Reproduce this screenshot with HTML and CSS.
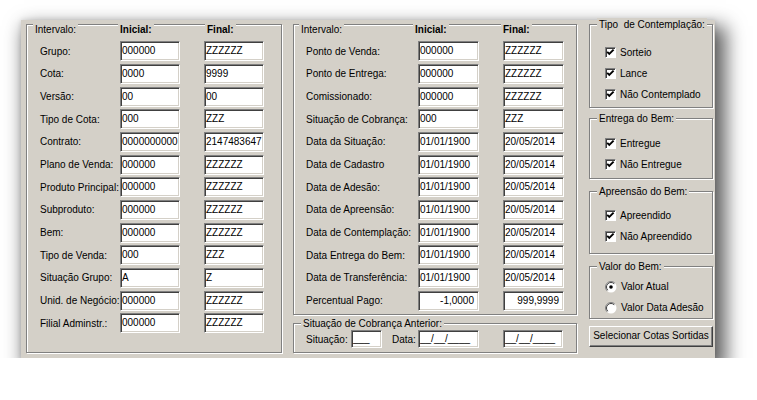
FILE: index.html
```html
<!DOCTYPE html>
<html>
<head>
<meta charset="utf-8">
<link rel="stylesheet" href="styles.css">
</head>
<body>
<div class="window">
  <div class="group g-left">
    <div class="grid grid-left">
      <span class="cap cap-first">Intervalo:</span><span class="cap cap-b cap-ini">Inicial:</span><span class="cap cap-b cap-fin">Final:</span>
      <span class="lbl">Grupo:</span><div class="edit">000000</div><div class="edit">ZZZZZZ</div>
      <span class="lbl">Cota:</span><div class="edit">0000</div><div class="edit">9999</div>
      <span class="lbl">Versão:</span><div class="edit">00</div><div class="edit">00</div>
      <span class="lbl">Tipo de Cota:</span><div class="edit">000</div><div class="edit">ZZZ</div>
      <span class="lbl">Contrato:</span><div class="edit">0000000000</div><div class="edit">2147483647</div>
      <span class="lbl">Plano de Venda:</span><div class="edit">000000</div><div class="edit">ZZZZZZ</div>
      <span class="lbl">Produto Principal:</span><div class="edit">000000</div><div class="edit">ZZZZZZ</div>
      <span class="lbl">Subproduto:</span><div class="edit">000000</div><div class="edit">ZZZZZZ</div>
      <span class="lbl">Bem:</span><div class="edit">000000</div><div class="edit">ZZZZZZ</div>
      <span class="lbl">Tipo de Venda:</span><div class="edit">000</div><div class="edit">ZZZ</div>
      <span class="lbl">Situação Grupo:</span><div class="edit">A</div><div class="edit">Z</div>
      <span class="lbl">Unid. de Negócio:</span><div class="edit">000000</div><div class="edit">ZZZZZZ</div>
      <span class="lbl">Filial Adminstr.:</span><div class="edit">000000</div><div class="edit">ZZZZZZ</div>
    </div>
  </div>

  <div class="mid">
    <div class="group g-mid">
      <div class="grid grid-mid">
        <span class="cap cap-first">Intervalo:</span><span class="cap cap-b cap-ini2">Inicial:</span><span class="cap cap-b cap-fin2">Final:</span>
        <span class="lbl">Ponto de Venda:</span><div class="edit">000000</div><div class="edit">ZZZZZZ</div>
        <span class="lbl">Ponto de Entrega:</span><div class="edit">000000</div><div class="edit">ZZZZZZ</div>
        <span class="lbl">Comissionado:</span><div class="edit">000000</div><div class="edit">ZZZZZZ</div>
        <span class="lbl">Situação de Cobrança:</span><div class="edit">000</div><div class="edit">ZZZ</div>
        <span class="lbl">Data da Situação:</span><div class="edit">01/01/1900</div><div class="edit">20/05/2014</div>
        <span class="lbl">Data de Cadastro</span><div class="edit">01/01/1900</div><div class="edit">20/05/2014</div>
        <span class="lbl">Data de Adesão:</span><div class="edit">01/01/1900</div><div class="edit">20/05/2014</div>
        <span class="lbl">Data de Apreensão:</span><div class="edit">01/01/1900</div><div class="edit">20/05/2014</div>
        <span class="lbl">Data de Contemplação:</span><div class="edit">01/01/1900</div><div class="edit">20/05/2014</div>
        <span class="lbl">Data Entrega do Bem:</span><div class="edit">01/01/1900</div><div class="edit">20/05/2014</div>
        <span class="lbl">Data de Transferência:</span><div class="edit">01/01/1900</div><div class="edit">20/05/2014</div>
        <span class="lbl">Percentual Pago:</span><div class="edit num">-1,0000</div><div class="edit num">999,9999</div>
      </div>
    </div>
    <div class="group g-sit">
      <span class="gcap">Situação de Cobrança Anterior:</span>
      <div class="sit-row">
        <span class="sit-lbl">Situação:</span><div class="edit e-sit">___</div>
        <span class="sit-lbl2">Data:</span><div class="edit e-d1">__/__/____</div><div class="edit e-d2">__/__/____</div>
      </div>
    </div>
  </div>

  <div class="right">
    <div class="group r-tipo">
      <span class="gcap">Tipo&nbsp; de Contemplação:</span>
      <div class="opt"><span class="chk"><svg width="11" height="11" viewBox="0 0 11 11"><polyline points="2.2,4.8 4.3,7 8.6,2.6" fill="none" stroke="#000" stroke-width="1.9"/></svg></span>Sorteio</div>
      <div class="opt"><span class="chk"><svg width="11" height="11" viewBox="0 0 11 11"><polyline points="2.2,4.8 4.3,7 8.6,2.6" fill="none" stroke="#000" stroke-width="1.9"/></svg></span>Lance</div>
      <div class="opt"><span class="chk"><svg width="11" height="11" viewBox="0 0 11 11"><polyline points="2.2,4.8 4.3,7 8.6,2.6" fill="none" stroke="#000" stroke-width="1.9"/></svg></span>Não Contemplado</div>
    </div>
    <div class="group r-entrega">
      <span class="gcap">Entrega do Bem:</span>
      <div class="opt"><span class="chk"><svg width="11" height="11" viewBox="0 0 11 11"><polyline points="2.2,4.8 4.3,7 8.6,2.6" fill="none" stroke="#000" stroke-width="1.9"/></svg></span>Entregue</div>
      <div class="opt"><span class="chk"><svg width="11" height="11" viewBox="0 0 11 11"><polyline points="2.2,4.8 4.3,7 8.6,2.6" fill="none" stroke="#000" stroke-width="1.9"/></svg></span>Não Entregue</div>
    </div>
    <div class="group r-apreensao">
      <span class="gcap">Apreensão do Bem:</span>
      <div class="opt"><span class="chk"><svg width="11" height="11" viewBox="0 0 11 11"><polyline points="2.2,4.8 4.3,7 8.6,2.6" fill="none" stroke="#000" stroke-width="1.9"/></svg></span>Apreendido</div>
      <div class="opt"><span class="chk"><svg width="11" height="11" viewBox="0 0 11 11"><polyline points="2.2,4.8 4.3,7 8.6,2.6" fill="none" stroke="#000" stroke-width="1.9"/></svg></span>Não Apreendido</div>
    </div>
    <div class="group r-valor">
      <span class="gcap">Valor do Bem:</span>
      <div class="opt"><span class="rad"><svg width="12" height="12" viewBox="0 0 12 12"><circle cx="6" cy="6" r="5.5" fill="#fff"/><path d="M2.1,9.9 A5.5,5.5 0 0 1 9.9,2.1" fill="none" stroke="#808080" stroke-width="1"/><path d="M2.8,9.2 A4.5,4.5 0 0 1 9.2,2.8" fill="none" stroke="#404040" stroke-width="1"/><circle cx="6" cy="6" r="1.8" fill="#000"/></svg></span>Valor Atual</div>
      <div class="opt"><span class="rad"><svg width="12" height="12" viewBox="0 0 12 12"><circle cx="6" cy="6" r="5.5" fill="#fff"/><path d="M2.1,9.9 A5.5,5.5 0 0 1 9.9,2.1" fill="none" stroke="#808080" stroke-width="1"/><path d="M2.8,9.2 A4.5,4.5 0 0 1 9.2,2.8" fill="none" stroke="#404040" stroke-width="1"/></svg></span>Valor Data Adesão</div>
    </div>
    <div class="btn">Selecionar Cotas Sortidas</div>
  </div>
</div>
</body>
</html>
```

FILE: styles.css
```css
html, body {
  margin: 0;
  padding: 0;
  background: #ffffff;
}
body {
  font-family: "Liberation Sans", Arial, sans-serif;
  font-size: 10px;
  color: #000;
}
.window {
  margin: 20px 0 0 21px;
  width: 694px;
  height: 338px;
  box-sizing: border-box;
  padding: 4px 2px 0 5px;
  background: #d4d0c8;
  display: flex;
  align-items: flex-start;
  box-shadow: 7px 10px 18px 4px rgba(0, 0, 0, 0.62), 0 0 5px rgba(0, 0, 0, 0.12);
}
.group {
  box-sizing: border-box;
  border: 1px solid #808080;
  box-shadow: inset 1px 1px 0 #fff, 1px 1px 0 #fff;
  position: relative;
}
.g-left {
  width: 256px;
  height: 329px;
  margin-right: 11px;
}
.mid {
  display: flex;
  flex-direction: column;
  width: 284px;
  margin-right: 12px;
}
.g-mid {
  height: 291px;
}
.g-sit {
  height: 30px;
  margin-top: 8px;
}
.grid {
  display: grid;
  grid-template-rows: 15.67px;
  grid-auto-rows: 20px;
  row-gap: 2.67px;
  column-gap: 0;
  margin-top: -2px;
  align-items: center;
}
.grid-left {
  grid-template-columns: 80px 84px 60px;
  padding-left: 13px;
}
.grid-left .edit {
  width: 60px;
}
.grid-mid {
  grid-template-columns: 112px 85px 61px;
  padding-left: 12px;
}
.grid-mid .edit {
  width: 61px;
}
.cap {
  align-self: start;
  justify-self: start;
  line-height: 13px;
  background: #d4d0c8;
  padding: 0 2px;
  white-space: nowrap;
}
.cap-first { margin-left: -7px; }
.cap-b { font-weight: bold; }
.cap-ini { margin-left: -2px; }
.cap-fin { margin-left: 1px; }
.cap-ini2 { margin-left: -5px; }
.cap-fin2 { margin-left: -2px; }
.lbl {
  line-height: 13px;
  white-space: nowrap;
}
.edit {
  box-sizing: border-box;
  height: 20px;
  background: #fff;
  border: 1px solid;
  border-color: #808080 #ffffff #ffffff #808080;
  box-shadow: inset 1px 1px 0 #404040, inset -1px -1px 0 #d4d0c8;
  padding: 0 1px 0 1px;
  line-height: 18px;
  white-space: nowrap;
  overflow: hidden;
}
.edit.num {
  text-align: right;
  padding-right: 4px;
}
.gcap {
  position: absolute;
  top: -7px;
  left: 7px;
  padding: 0 2px;
  line-height: 13px;
  background: #d4d0c8;
  white-space: nowrap;
}
.sit-row {
  display: flex;
  align-items: center;
  padding: 6px 0 0 12px;
}
.sit-lbl {
  width: 45px;
}
.e-sit {
  width: 31px;
  height: 18px;
  line-height: 16px;
}
.sit-lbl2 {
  margin-left: 10px;
  width: 26px;
}
.e-d1 {
  width: 61px;
  height: 18px;
  line-height: 16px;
}
.e-d2 {
  width: 60px;
  height: 18px;
  line-height: 16px;
  margin-left: 24px;
}
.right {
  width: 124px;
  display: flex;
  flex-direction: column;
}
.r-tipo {
  height: 84px;
  padding-top: 17px;
}
.r-entrega {
  height: 61px;
  margin-top: 10px;
  padding-top: 14px;
}
.r-apreensao {
  height: 63px;
  margin-top: 12px;
  padding-top: 13px;
}
.r-valor {
  height: 53px;
  margin-top: 12px;
  padding-top: 9px;
}
.opt {
  display: flex;
  align-items: center;
  height: 21px;
  padding-left: 15px;
  white-space: nowrap;
}
.chk {
  box-sizing: border-box;
  width: 11px;
  height: 11px;
  background: #fff;
  border: 1px solid;
  border-color: #808080 #ffffff #ffffff #808080;
  box-shadow: inset 1px 1px 0 #404040;
  margin-right: 4px;
  position: relative;
  flex: none;
}
.chk svg {
  position: absolute;
  left: -1px;
  top: -1px;
}
.rad {
  width: 12px;
  height: 12px;
  margin-right: 4px;
  flex: none;
  display: block;
}
.rad svg { display: block; }
.btn {
  box-sizing: border-box;
  height: 21px;
  margin-top: 7px;
  border: 1px solid;
  border-color: #ffffff #404040 #404040 #ffffff;
  box-shadow: inset -1px -1px 0 #808080;
  text-align: center;
  line-height: 18px;
  white-space: nowrap;
}
```
